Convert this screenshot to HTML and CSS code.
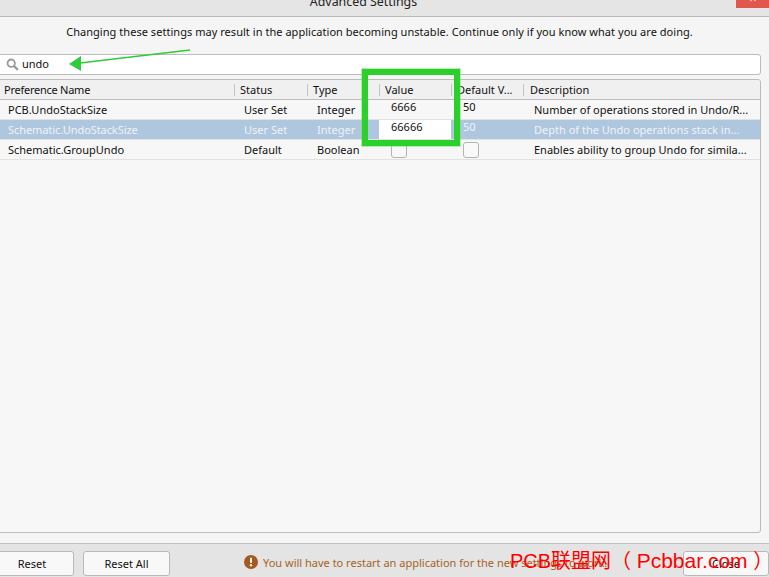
FILE: index.html
```html
<!DOCTYPE html>
<html lang="en">
<head>
<meta charset="utf-8">
<title>Advanced Settings</title>
<link rel="stylesheet" href="styles.css">
</head>
<body>
<div class="dialog">
  <header class="titlebar">
    <span class="title">Advanced Settings</span>
    <span class="winclose"><svg width="12" height="8" viewBox="0 0 12 8"><path d="M3.5 -4 L8.5 1 M8.5 -4 L3.5 1" fill="none" stroke="#f7d5d0" stroke-width="1.2"/></svg></span>
  </header>
  <main class="content">
    <p class="notice">Changing these settings may result in the application becoming unstable. Continue only if you know what you are doing.</p>
    <div class="search">
      <svg class="search-icon" width="13" height="13" viewBox="0 0 13 13"><circle cx="5.2" cy="5.2" r="3.7" fill="none" stroke="#9a9a9a" stroke-width="1.8"/><path d="M8 8 L11.8 11.8" stroke="#9a9a9a" stroke-width="2.4"/></svg>
      <span>undo</span>
    </div>
    <div class="table">
      <div class="row head">
        <div class="cell first">Preference Name</div>
        <div class="cell sep">Status</div>
        <div class="cell sep">Type</div>
        <div class="cell sep">Value</div>
        <div class="cell sep">Default V...</div>
        <div class="cell sep last">Description</div>
      </div>
      <div class="row">
        <div class="cell first">PCB.UndoStackSize</div>
        <div class="cell">User Set</div>
        <div class="cell">Integer</div>
        <div class="cell val">6666</div>
        <div class="cell val">50</div>
        <div class="cell desc">Number of operations stored in Undo/R...</div>
      </div>
      <div class="row selected">
        <div class="cell first">Schematic.UndoStackSize</div>
        <div class="cell">User Set</div>
        <div class="cell">Integer</div>
        <div class="cell val editing">66666</div>
        <div class="cell val">50</div>
        <div class="cell desc">Depth of the Undo operations stack in...</div>
      </div>
      <div class="row">
        <div class="cell first">Schematic.GroupUndo</div>
        <div class="cell">Default</div>
        <div class="cell">Boolean</div>
        <div class="cell val"><span class="check"></span></div>
        <div class="cell val"><span class="check"></span></div>
        <div class="cell desc">Enables ability to group Undo for simila...</div>
      </div>
    </div>
  </main>
  <footer class="footer">
    <button class="btn reset">Reset</button>
    <button class="btn reset-all">Reset All</button>
    <div class="warning">
      <svg width="14" height="14" viewBox="0 0 14 14"><circle cx="7" cy="7" r="7" fill="#a5591a"/><path d="M7 2.8 V7.8" stroke="#fff" stroke-width="2"/><circle cx="7" cy="10.3" r="1.2" fill="#fff"/></svg>
      <span>You will have to restart an application for the new settings to work.</span>
    </div>
    <button class="btn close">Close</button>
  </footer>
</div>
<div class="highlight"></div>
<svg class="arrow" width="130" height="30" viewBox="0 0 130 30"><path d="M121 1 L11 14" stroke="#2ecb3a" stroke-width="1.4" fill="none"/><path d="M0 15 L12 7 L12 22 Z" fill="#2ecb3a"/></svg>
<div class="watermark">PCB联盟网（ <span class="wm-url">Pcbbar.com</span> ）</div>
</body>
</html>
```
FILE: styles.css
```css
* { box-sizing: border-box; }
html, body { margin: 0; height: 100%; overflow: hidden; }
body {
  position: relative;
  width: 769px;
  height: 577px;
  font-family: "Noto Sans", sans-serif;
  font-size: 11px;
  color: #111;
  background: #f5f5f5;
}
.dialog { display: flex; flex-direction: column; height: 577px; }

.titlebar {
  height: 17px;
  flex: none;
  display: flex;
  justify-content: center;
  align-items: flex-end;
  position: relative;
  overflow: hidden;
  background: #e5e5e5;
  border-bottom: 1px solid #b9b9b9;
}
.title { font-size: 12.4px; line-height: 16px; margin-bottom: 6px; margin-right: 42px; color: #222; }
.winclose {
  position: absolute;
  top: 0;
  right: 0;
  width: 33px;
  height: 8px;
  background: #e2574c;
  display: flex;
  justify-content: center;
}

.content { flex: 1; display: flex; flex-direction: column; padding: 0 8px 10px 0; min-height: 0; }
.notice { margin: 0; height: 37px; padding: 6px 2px 0 0; line-height: 18px; letter-spacing: .04px; text-align: center; white-space: nowrap; }

.search {
  height: 21px;
  flex: none;
  margin-left: -4px;
  padding: 0 0 2px 9px;
  display: flex;
  align-items: center;
  gap: 3px;
  background: #fff;
  border: 1px solid #bcbcbc;
  border-radius: 3px;
}
.search-icon { flex: none; margin-top: 2px; }

.table {
  flex: 1;
  margin-top: 4px;
  margin-left: -4px;
  border: 1px solid #bcbcbc;
  border-radius: 3px;
  background: #f7f7f7;
  overflow: hidden;
}
.row {
  display: grid;
  grid-template-columns: 237px 73px 72px 72px 72px 1fr;
  height: 20px;
  border-bottom: 1px solid #e2e2e2;
}
.head { background: #f0f0f0; border-bottom: 1px solid #bcbcbc; }
.cell { padding-left: 10px; line-height: 19px; white-space: nowrap; overflow: hidden; }
.cell.first { padding-left: 11px; }
.cell.desc { padding-left: 11px; }
.head .cell { padding-left: 6px; position: relative; }
.head .cell.first { padding-left: 7px; letter-spacing: -.25px; }
.head .cell.last { padding-left: 7px; }
.head .cell.sep::before {
  content: "";
  position: absolute;
  left: 0;
  top: 4px;
  bottom: 3px;
  width: 1px;
  background: #c4c4c4;
}
.cell.sep { overflow: visible; }
.selected { background: #afc6df; color: #eef3f8; }
.selected .first { letter-spacing: -.08px; }
.cell.val { padding-left: 12px; line-height: 14px; position: relative; }
.selected .editing { background: #fff; color: #111; }
.check {
  position: absolute;
  left: 12px;
  top: 2px;
  width: 16px;
  height: 16px;
  border: 1px solid #b3b3b3;
  border-radius: 3px;
  background: #f9f9f9;
}

.footer {
  height: 34px;
  flex: none;
  display: flex;
  align-items: flex-start;
  padding-top: 7px;
  background: #e4e4e4;
  border-top: 1px solid #c0c0c0;
}
.btn {
  height: 25px;
  font: inherit;
  color: #111;
  background: #f8f8f8;
  border: 1px solid #b9b9b9;
  border-radius: 3px;
  padding: 0 0 1px;
}
.reset { width: 84px; margin-left: -10px; }
.reset-all { width: 87px; margin-left: 9px; }
.warning {
  display: flex;
  align-items: center;
  gap: 5px;
  width: 439px;
  margin-left: 74px;
  height: 22px;
  color: #a5631f;
  white-space: nowrap;
}
.close { width: 86px; }

.highlight {
  position: absolute;
  left: 362px;
  top: 69px;
  width: 98px;
  height: 77px;
  border: 6px solid #2bd02b;
  box-shadow: 0 0 0 1px rgba(120, 220, 120, .5);
}
.arrow { position: absolute; left: 69px; top: 49px; }
.watermark {
  position: absolute;
  left: 510px;
  top: 549px;
  font-family: "Liberation Sans", "Noto Sans CJK SC", sans-serif;
  font-size: 20px;
  line-height: 24px;
  color: #ff0000;
  white-space: nowrap;
}
.wm-url { font-size: 21px; }
```
